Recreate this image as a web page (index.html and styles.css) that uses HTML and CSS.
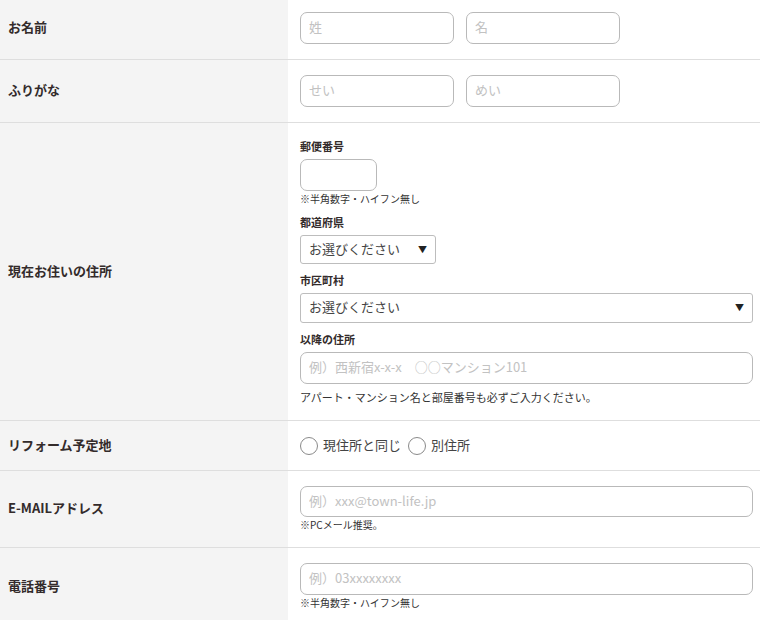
FILE: index.html
```html
<!DOCTYPE html>
<html lang="ja">
<head>
<meta charset="utf-8">
<title>フォーム</title>
<link rel="stylesheet" href="styles.css">
</head>
<body>
<div class="form">
  <div class="row row-first">
    <div class="label">お名前</div>
    <div class="field">
      <div class="pair">
        <input class="input half" type="text" placeholder="姓">
        <input class="input half" type="text" placeholder="名">
      </div>
    </div>
  </div>
  <div class="row">
    <div class="label">ふりがな</div>
    <div class="field">
      <div class="pair">
        <input class="input half" type="text" placeholder="せい">
        <input class="input half" type="text" placeholder="めい">
      </div>
    </div>
  </div>
  <div class="row">
    <div class="label">現在お住いの住所</div>
    <div class="field">
      <div class="group">
        <div class="sub-label">郵便番号</div>
        <input class="input postal" type="text">
        <div class="note">※半角数字・ハイフン無し</div>
      </div>
      <div class="group">
        <div class="sub-label">都道府県</div>
        <div class="select select-small"><span>お選びください</span><span class="arrow">▼</span></div>
      </div>
      <div class="group">
        <div class="sub-label">市区町村</div>
        <div class="select select-full"><span>お選びください</span><span class="arrow">▼</span></div>
      </div>
      <div class="group">
        <div class="sub-label">以降の住所</div>
        <input class="input full" type="text" placeholder="例）西新宿x-x-x　○○マンション101">
        <div class="note-large">アパート・マンション名と部屋番号も必ずご入力ください。</div>
      </div>
    </div>
  </div>
  <div class="row">
    <div class="label">リフォーム予定地</div>
    <div class="field">
      <div class="radios">
        <label class="radio"><span class="circle"></span><span class="radio-text">現住所と同じ</span></label>
        <label class="radio"><span class="circle"></span><span class="radio-text">別住所</span></label>
      </div>
    </div>
  </div>
  <div class="row">
    <div class="label">E-MAILアドレス</div>
    <div class="field">
      <input class="input full email" type="text" placeholder="例）xxx@town-life.jp">
      <div class="note">※PCメール推奨。</div>
    </div>
  </div>
  <div class="row">
    <div class="label">電話番号</div>
    <div class="field">
      <input class="input full" type="text" placeholder="例）03xxxxxxxx">
      <div class="note">※半角数字・ハイフン無し</div>
    </div>
  </div>
</div>
</body>
</html>
```
FILE: styles.css
```css
* { box-sizing: border-box; }
html, body {
  margin: 0;
  padding: 0;
  background: #fff;
}
body {
  font-family: "Noto Sans CJK JP", "Noto Sans", sans-serif;
  color: #333;
  overflow: hidden;
}
.form {
  width: 760px;
  margin-top: -3px;
}
.row {
  display: flex;
  border-bottom: 1px solid #dedede;
}
.label {
  width: 288px;
  flex: none;
  background: #f4f4f4;
  display: flex;
  align-items: center;
  padding-left: 8px;
  padding-bottom: 3px;
  font-size: 13px;
  font-weight: bold;
  color: #332b2b;
}
.field {
  flex: 1;
  padding: 15px 7px 15px 12px;
}
.pair {
  display: flex;
  gap: 12px;
}
.input {
  display: block;
  height: 32px;
  border: 1px solid #b9b9b9;
  border-radius: 7px;
  padding: 0 8px 3px;
  font-family: inherit;
  font-size: 13px;
  color: #333;
  background: #fff;
  outline: none;
}
.input::placeholder {
  color: #c2c2c2;
}
.half { width: 154px; }
.postal { width: 77px; }
.full { width: 453px; }
.email { height: 31px; }
.group + .group { margin-top: 8px; }
.sub-label {
  font-size: 11px;
  font-weight: bold;
  line-height: 16px;
  margin-bottom: 5px;
  color: #332b2b;
}
.note {
  font-size: 10px;
  line-height: 15px;
  color: #333;
}
.note-large {
  font-size: 11px;
  line-height: 16px;
  margin-top: 5px;
  color: #333;
}
.select {
  display: flex;
  justify-content: space-between;
  align-items: center;
  border: 1px solid #bdbdbd;
  border-radius: 3px;
  padding: 0 8px 3px 8px;
  font-size: 13px;
  color: #444;
  background: #fff;
}
.select-small { width: 136px; height: 29px; }
.select-full { width: 453px; height: 30px; }
.arrow {
  font-size: 9px;
  color: #222;
  padding-top: 2px;
}
.radios {
  display: flex;
  align-items: center;
  gap: 7px;
  height: 19px;
}
.radio {
  display: flex;
  align-items: center;
  gap: 5px;
  font-size: 13px;
  color: #444;
}
.radio-text {
  padding-bottom: 3px;
}
.circle {
  width: 18px;
  height: 18px;
  border: 1px solid #8a8a8a;
  border-radius: 50%;
  background: #fff;
}
```
